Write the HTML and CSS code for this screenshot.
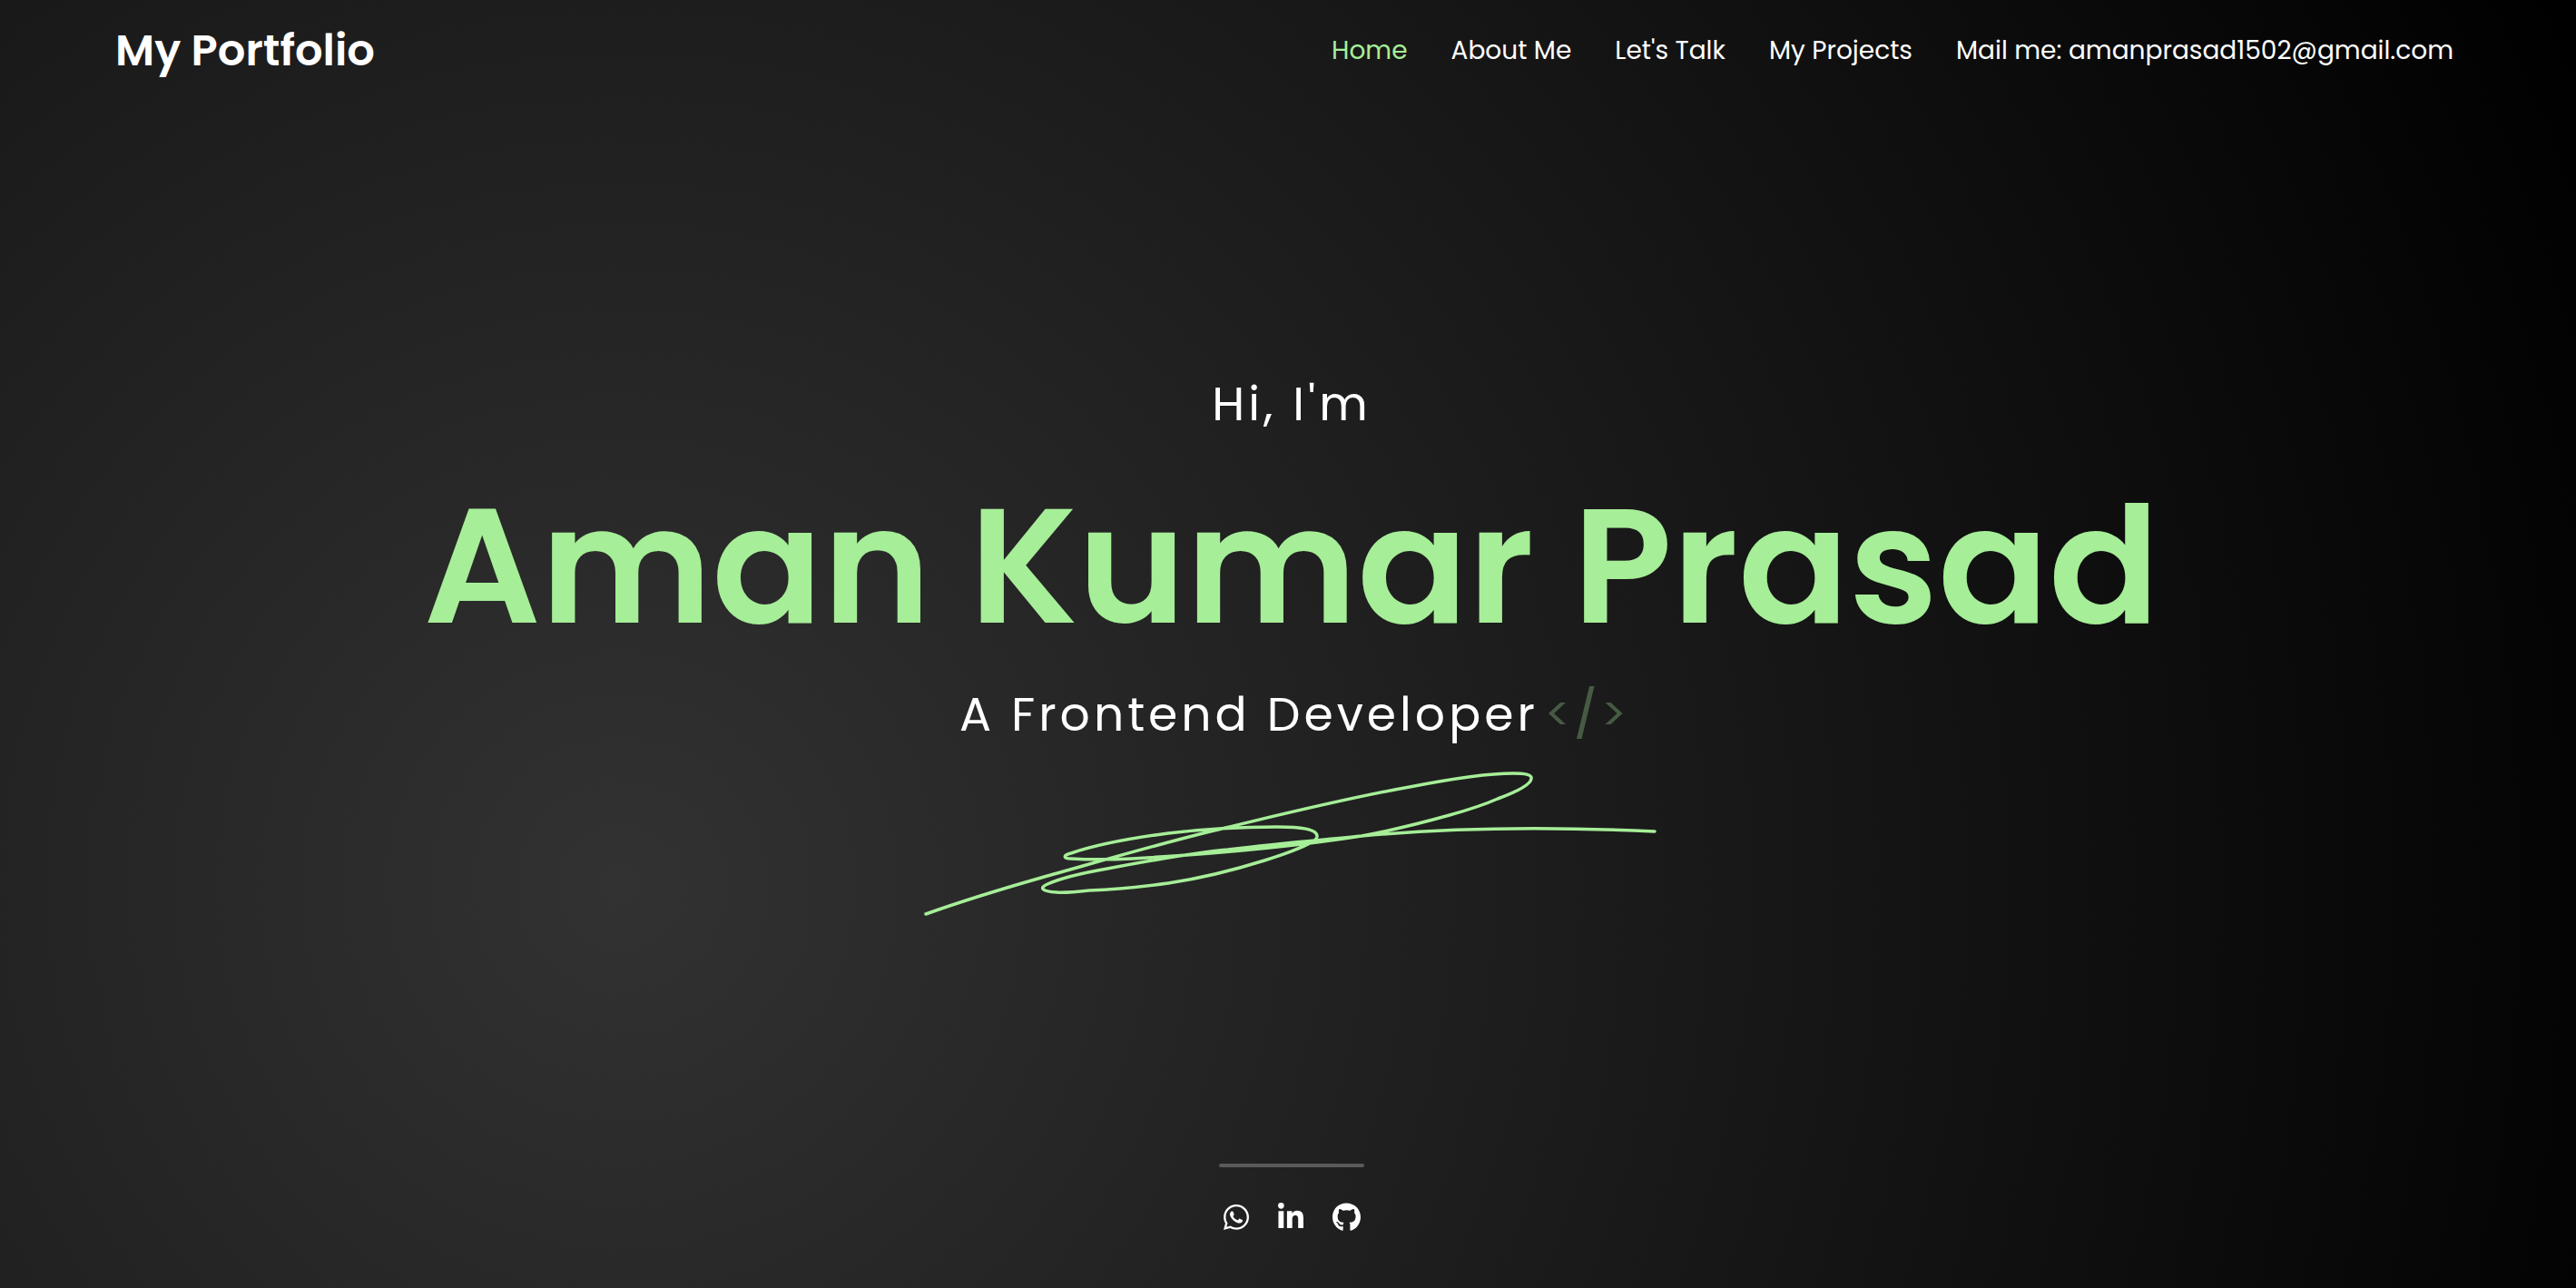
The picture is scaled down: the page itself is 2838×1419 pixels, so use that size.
FILE: index.html
```html
<!DOCTYPE html>
<html lang="en">
<head>
<meta charset="utf-8">
<meta name="viewport" content="width=device-width, initial-scale=1">
<title>My Portfolio</title>
<link rel="stylesheet" href="styles.css">
</head>
<body>
<header class="header">
  <a class="logo" href="#">My Portfolio</a>
  <nav class="nav">
    <a class="nav-link active" href="#home">Home</a>
    <a class="nav-link" href="#about">About Me</a>
    <a class="nav-link" href="#contact">Let's Talk</a>
    <a class="nav-link" href="#projects">My Projects</a>
    <a class="nav-link" href="mailto:amanprasad1502@gmail.com">Mail me: amanprasad1502@gmail.com</a>
  </nav>
</header>
<main class="hero">
  <p class="line">Hi, I'm</p>
  <h1 class="name">Aman Kumar Prasad</h1>
  <p class="line role">A Frontend Developer
    <svg class="code" viewBox="0 0 84 62" role="img" aria-label="code"><path d="M14 18h6L7 30l13 12h-6L1 30zM63.500 18h6l13 12-13 12h-6l13-12zM46 0h5.500L37.500 58H32z"/></svg>
  </p>
  <svg class="scribble" viewBox="1 0 810 164" aria-hidden="true"><path stroke-width="3.5" d="M3 159C45 144 88 131 130 119C198 100 265 80 333 64C400 48 468 31 536 19C582 10 620 4 650 4C662 4 671 5 670 10C669 17 652 25 633 32C615 40 598 45 580 50C548 59 515 67 483 73C400 86 315 93 230 98C208 99 180 99 163 98C154 98 154 94 163 92C195 81 232 75 270 70C312 65 350 63 390 63C415 63 435 65 434 74C433 80 405 91 376 100C341 111 310 119 270 125C240 129 212 132 183 133C165 135 155 136 147 135C130 134 128 130 137 126C155 118 180 113 203 109C250 100 293 92 336 88C400 80 445 77 483 73C590 63 700 63 806 68"/></svg>
</main>
<footer class="footer">
  <hr class="rule">
  <div class="social">
    <a href="#whatsapp" aria-label="WhatsApp"><svg class="icon" viewBox="0 0 448 512"><path d="M380.900 97.100C339 55.100 283.200 32 223.900 32c-122.400 0-222 99.600-222 222 0 39.100 10.200 77.300 29.600 111L0 480l117.700-30.900c32.400 17.700 68.900 27 106.100 27h.1c122.300 0 224.100-99.600 224.100-222 0-59.300-25.200-115-67.100-157zm-157 341.600c-33.200 0-65.700-8.900-94-25.700l-6.700-4-69.800 18.300L72 359.200l-4.400-7c-18.500-29.400-28.200-63.300-28.200-98.200 0-101.700 82.800-184.500 184.600-184.500 49.300 0 95.600 19.200 130.400 54.100 34.800 34.900 56.200 81.200 56.100 130.500 0 101.800-84.900 184.600-186.600 184.600zm101.200-138.200c-5.500-2.800-32.800-16.200-37.900-18-5.100-1.900-8.800-2.800-12.500 2.800-3.700 5.600-14.300 18-17.600 21.800-3.200 3.700-6.500 4.200-12 1.400-32.600-16.300-54-29.100-75.500-66-5.700-9.800 5.700-9.100 16.300-30.300 1.800-3.700.9-6.900-.5-9.700-1.400-2.800-12.500-30.100-17.100-41.200-4.500-10.800-9.100-9.300-12.500-9.500-3.200-.2-6.900-.2-10.600-.2-3.700 0-9.700 1.400-14.800 6.900-5.100 5.600-19.400 19-19.400 46.300 0 27.300 19.900 53.700 22.600 57.400 2.800 3.700 39.100 59.700 94.800 83.800 35.200 15.200 49 16.500 66.600 13.900 10.700-1.600 32.800-13.400 37.400-26.400 4.600-13 4.600-24.100 3.200-26.400-1.300-2.500-5-3.900-10.500-6.600z"/></svg></a>
    <a href="#linkedin" aria-label="LinkedIn"><svg class="icon" viewBox="0 0 448 512"><path d="M100.280 448H7.400V148.900h92.880zM53.790 108.100C24.090 108.100 0 83.500 0 53.800a53.790 53.790 0 0 1 107.580 0c0 29.700-24.100 54.300-53.790 54.300zM447.900 448h-92.680V302.400c0-34.700-.7-79.200-48.290-79.200-48.290 0-55.690 37.700-55.690 76.700V448h-92.780V148.900h89.080v40.800h1.300c12.400-23.500 42.690-48.300 87.880-48.300 94 0 111.280 61.900 111.280 142.300V448z"/></svg></a>
    <a href="#github" aria-label="GitHub"><svg class="icon icon-wide" viewBox="0 0 496 512"><path d="M165.900 397.400c0 2-2.300 3.600-5.200 3.600-3.300.3-5.600-1.300-5.600-3.600 0-2 2.300-3.600 5.200-3.600 3-.3 5.600 1.300 5.600 3.600zm-31.100-4.500c-.7 2 1.300 4.300 4.300 4.900 2.600 1 5.600 0 6.200-2s-1.300-4.300-4.300-5.200c-2.600-.7-5.500.3-6.200 2.300zm44.200-1.700c-2.900.7-4.900 2.600-4.600 4.900.3 2 2.900 3.300 5.900 2.600 2.900-.7 4.900-2.600 4.600-4.600-.3-1.900-3-3.200-5.900-2.900zM244.800 8C106.100 8 0 113.300 0 252c0 110.900 69.800 205.800 169.500 239.200 12.800 2.300 17.300-5.600 17.300-12.100 0-6.200-.3-40.400-.3-61.400 0 0-70 15-84.700-29.800 0 0-11.400-29.100-27.800-36.600 0 0-22.900-15.700 1.600-15.400 0 0 24.900 2 38.600 25.800 21.900 38.600 58.600 27.500 72.900 20.900 2.300-16 8.800-27.100 16-33.700-55.900-6.200-112.300-14.300-112.300-110.500 0-27.500 7.600-41.300 23.600-58.900-2.600-6.500-11.100-33.300 2.600-67.900 20.900-6.500 69 27 69 27 20-5.600 41.500-8.500 62.800-8.500s42.800 2.900 62.800 8.500c0 0 48.100-33.600 69-27 13.700 34.700 5.200 61.400 2.600 67.900 16 17.700 25.800 31.500 25.800 58.900 0 96.500-58.900 104.200-114.800 110.500 9.200 7.900 17 22.900 17 46.400 0 33.700-.3 75.400-.3 83.600 0 6.500 4.600 14.400 17.300 12.100C428.200 457.800 496 362.900 496 252 496 113.300 383.500 8 244.800 8z"/></svg></a>
  </div>
</footer>
</body>
</html>
```
FILE: styles.css
```css
* { box-sizing: border-box; margin: 0; padding: 0; }
body {
  min-height: 100vh;
  display: flex;
  flex-direction: column;
  font-family: Poppins, Inter, sans-serif;
  color: #fff;
  background: radial-gradient(circle at 24.1% 68.8%, rgb(50, 50, 50) 0%, rgb(0, 0, 0) 99.4%);
}
a { color: inherit; text-decoration: none; }
.header {
  display: flex;
  align-items: center;
  justify-content: space-between;
  height: 112px;
  padding: 0 135px 0 127px;
}
.logo { font-size: 48px; font-weight: 600; }
.nav { display: flex; gap: 48px; font-size: 28px; }
.nav-link.active { color: #a6ee98; }
.hero {
  flex: 1;
  display: flex;
  flex-direction: column;
  align-items: center;
  padding: 298px 0 0 8px;
}
.line { font-size: 52px; line-height: 70px; letter-spacing: 4px; }
.name { margin: 23px 0 9px; font-size: 180px; line-height: 240px; font-weight: 600; color: #a6ee98; }
.role { display: flex; align-items: center; gap: 10px; }
.code { width: 84px; height: 62px; fill: #465b43; }
.scribble {
  width: 810px;
  height: 164px;
  margin-top: 26px;
  fill: none;
  stroke: #a6ee98;
  stroke-linecap: round;
}
.footer {
  display: flex;
  flex-direction: column;
  align-items: center;
  gap: 39px;
  padding: 0 0 62px 8px;
}
.rule { width: 160px; height: 4px; border: 0; border-radius: 2px; background: #5a5a5a; }
.social { display: flex; gap: 32px; }
.icon { display: block; width: 28px; height: 32px; fill: #fff; }
.icon-wide { width: 31px; }
```
